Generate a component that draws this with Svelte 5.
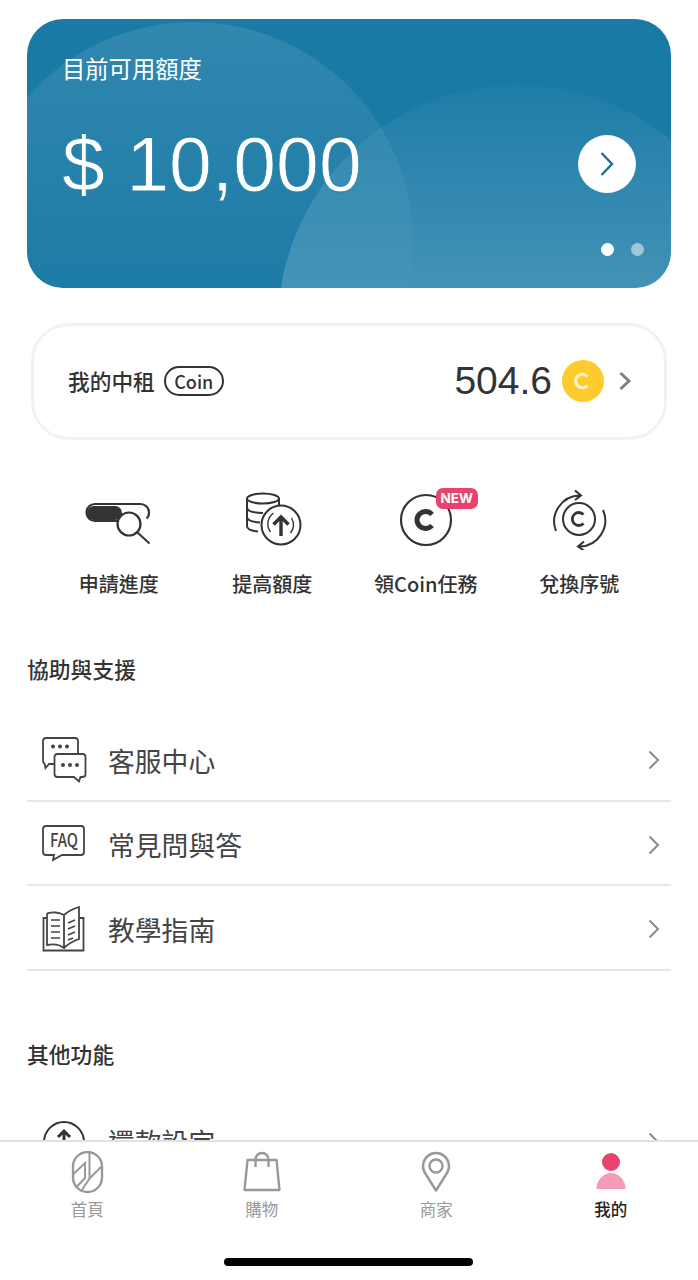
<script>
  const quick = [
    { id: 'progress', label: '申請進度' },
    { id: 'raise', label: '提高額度' },
    { id: 'task', label: '領Coin任務' },
    { id: 'redeem', label: '兌換序號' },
  ];
  const support = [
    { id: 'chat', label: '客服中心' },
    { id: 'faq', label: '常見問與答' },
    { id: 'book', label: '教學指南' },
  ];
  const tabs = [
    { id: 'home', label: '首頁' },
    { id: 'shop', label: '購物' },
    { id: 'shops', label: '商家' },
    { id: 'me', label: '我的', active: true },
  ];
</script>

{#snippet chevron()}
  <svg class="chev" viewBox="0 0 14 22" width="14" height="22">
    <path d="M2.5 2.5 11 11 2.5 19.5" fill="none" stroke="#8c8c8c" stroke-width="2" />
  </svg>
{/snippet}

<div class="page">
  <section class="card">
    <div class="blob blob-a"></div>
    <div class="blob blob-b"></div>
    <div class="card-label">目前可用額度</div>
    <div class="card-mid">
      <div class="card-amount">$ 10,000</div>
      <div class="card-go">
        <svg viewBox="0 0 16 28" width="16" height="28">
          <path d="M2.5 3 13 14 2.5 25" fill="none" stroke="#1d6f94" stroke-width="2.4" />
        </svg>
      </div>
    </div>
    <div class="dots"><i class="on"></i><i></i></div>
  </section>

  <section class="coin">
    <span class="coin-title">我的中租</span>
    <span class="coin-pill">Coin</span>
    <span class="coin-num">504.6</span>
    <svg class="coin-badge" viewBox="0 0 42 42" width="42" height="42">
      <circle cx="21" cy="21" r="21" fill="#fdcb2e" />
      <path d="M25.5 16.500a6.800 6.800 0 1 0 0 9" fill="none" stroke="#fff3c8" stroke-width="3" />
    </svg>
    <svg class="coin-chev" viewBox="0 0 14 22" width="14" height="22">
      <path d="M2.5 3 11 11 2.5 19" fill="none" stroke="#808080" stroke-width="3" />
    </svg>
  </section>

  <section class="quick">
    {#each quick as q}
      <div class="quick-item">
        <div class="quick-icon">
          <svg viewBox="0 0 80 64" width="80" height="64" fill="none" stroke="#333" stroke-width="2">
            {#if q.id === 'progress'}
              <path d="M46 35H16a8.5 8.5 0 0 1 0-17h45.500a8.500 8.500 0 0 1 8.500 8.500q0 4-2.500 6" stroke-width="2.200" />
              <rect x="8" y="20" width="35" height="14" rx="7" fill="#333" stroke="none" />
              <circle cx="50" cy="38" r="11.500" fill="#fff" stroke-width="2.200" />
              <path d="M58.500 46.500 70.500 57.500" />
            {:else if q.id === 'raise'}
              <ellipse cx="31" cy="12.500" rx="16" ry="5" />
              <path d="M15 12.500V40q0 4.500 11 5.500M15 21.500q0 5 16 5.500M15 31q0 4.500 13 5.500M47 12.500V22" />
              <circle cx="49" cy="39" r="19.500" fill="#fff" />
              <path d="M38.500 46a13.500 13.500 0 0 1 3-19M59.500 32a13.500 13.500 0 0 1-1 15" stroke-width="1.400" />
              <path d="M49 50V31M41.500 38.500 49 31l7.500 7.500" stroke-width="3.400" />
            {:else if q.id === 'task'}
              <circle cx="40" cy="34" r="25" stroke-width="2.200" />
              <path d="M46 28.500a8.500 8.500 0 1 0 0 11" stroke-width="5" />
            {:else}
              <circle cx="40" cy="33" r="16" stroke-width="2" />
              <path d="M44.500 28.500a6.500 6.500 0 1 0 0 9" stroke-width="2.800" />
              <path d="M17 45a26 26 0 0 1 24-35.500M36 4.500l6 5-6 4.500" stroke-width="2" />
              <path d="M64 24a26 26 0 0 1-23 36.500M45 55.500l-6 5 6 4" stroke-width="2" />
            {/if}
          </svg>
          {#if q.id === 'task'}<span class="new">NEW</span>{/if}
        </div>
        <div class="quick-label">{q.label}</div>
      </div>
    {/each}
  </section>

  <h2 class="sec sec-help">協助與支援</h2>
  <div class="list">
    {#each support as s}
      <div class="row">
        <svg class="row-icon" viewBox="0 0 46 46" width="46" height="46" fill="none" stroke="#444" stroke-width="1.800">
          {#if s.id === 'chat'}
            <path d="M13 27H8l-3.500 4-1-4.500Q2 26 2 24V4q0-3 3-3h29q3 0 3 3v12" />
            <path d="M16.500 17h25q3 0 3 3v17q0 3-3 3h-2l-1.500 4.500-5-4.500H16.500q-3 0-3-3V20q0-3 3-3Z" fill="#fff" />
            <g fill="#444" stroke="none">
              <circle cx="12" cy="9.500" r="2" /><circle cx="19" cy="9.500" r="2" /><circle cx="26" cy="9.500" r="2" />
              <circle cx="22" cy="28" r="2" /><circle cx="29" cy="28" r="2" /><circle cx="36" cy="28" r="2" />
            </g>
          {:else if s.id === 'faq'}
            <path d="M5 4h35q3 0 3 3v23q0 3-3 3H21l-9 5 1-5H5q-3 0-3-3V7q0-3 3-3Z" />
            <text x="9" y="25" font-size="18" font-weight="500" fill="#444" stroke="none" textLength="28" lengthAdjust="spacingAndGlyphs">FAQ</text>
          {:else}
            <path d="M23 9C18 6 11 6 8 7q-2 0-2 2v30c5-1 12-1 17 3 4-4 9-7 15-9V1c-6 2-11 4-15 8ZM23 9v33" />
            <path d="M6 12H2.500v32.500H42.500V12H38" />
            <path d="M10 14h9M10 20h9M10 26h9M10 32h9M27 17l7-3M27 23l7-3M27 29l7-3M27 34l5-2" stroke-width="1.600" />
          {/if}
        </svg>
        <span class="row-label">{s.label}</span>
        {@render chevron()}
      </div>
    {/each}
  </div>

  <h2 class="sec sec-other">其他功能</h2>
  <div class="list">
    <div class="row">
      <svg class="row-icon" viewBox="0 0 46 46" width="46" height="46" fill="none" stroke="#333" stroke-width="2">
        <circle cx="23" cy="23" r="20" />
        <path d="M17 18 23 12l6 6M23 12v16" stroke-width="3" />
      </svg>
      <span class="row-label">還款設定</span>
      {@render chevron()}
    </div>
  </div>

  <nav class="tabbar">
    {#each tabs as t}
      <div class="tab" class:active={t.active}>
        <svg viewBox="0 0 44 44" width="44" height="44" fill="none" stroke="#999" stroke-width="2.400">
          {#if t.id === 'home'}
            <rect x="8" y="1" width="29" height="40" rx="14.500" />
            <path d="M8.500 23 20 12v15L11 36.500M24.500 2v25.500L36 16M24.500 27.500 17 39" stroke-width="2" />
          {:else if t.id === 'shop'}
            <path d="M7.500 9h29L39.500 39h-35Z" stroke-linejoin="round" />
            <path d="M15.500 16V8.500a6.500 6.500 0 0 1 13 0V16" />
          {:else if t.id === 'shops'}
            <path d="M22 39.500 11 22a13 13 0 1 1 22 0Z" stroke-linejoin="round" />
            <circle cx="22" cy="15" r="6.500" />
          {:else}
            <circle cx="22" cy="11" r="9" fill="#e8436f" stroke="none" />
            <path d="M7.500 38a14.500 16 0 0 1 29 0Z" fill="#f29cb5" stroke="none" />
          {/if}
        </svg>
        <span>{t.label}</span>
      </div>
    {/each}
    <div class="home-bar"></div>
  </nav>
</div>

<style>
  :global(body) { background: #fff; }

  .page {
    position: relative;
    width: 698px;
    height: 1280px;
    overflow: hidden;
    background: #fff;
    padding: 19px 27px 0;
    box-sizing: border-box;
    font-family: "Noto Sans CJK TC", "Noto Sans", sans-serif;
    color: #333;
  }

  .card {
    position: relative;
    height: 269px;
    border-radius: 36px;
    overflow: hidden;
    background: #1a7aa6;
    color: #fff;
    padding: 33px 35px 0;
    box-sizing: border-box;
  }
  .blob { position: absolute; border-radius: 50%; }
  .blob-a {
    left: -54px; top: 3px; width: 440px; height: 440px;
    background: linear-gradient(180deg, rgba(255, 255, 255, 0.1) 0%, rgba(255, 255, 255, 0.01) 60%);
  }
  .blob-b {
    left: 251px; top: 66px; width: 480px; height: 480px;
    background: linear-gradient(180deg, rgba(255, 255, 255, 0.02) 0%, rgba(255, 255, 255, 0.18) 42%);
  }
  .card-label { position: relative; font-size: 23.300px; line-height: 32px; }
  .card-mid {
    position: relative;
    display: flex;
    align-items: center;
    justify-content: space-between;
    margin-top: 32px;
  }
  .card-amount {
    font-family: "Liberation Sans", sans-serif;
    font-size: 77px;
    line-height: 96px;
    -webkit-text-stroke: 0.8px #2080a9;
  }
  .card-go {
    width: 58px; height: 58px; border-radius: 50%;
    background: #fff;
    display: flex; align-items: center; justify-content: center;
  }
  .dots { position: absolute; right: 27px; bottom: 32px; display: flex; gap: 17px; }
  .dots i { width: 13px; height: 13px; border-radius: 50%; background: rgba(255, 255, 255, 0.5); }
  .dots i.on { background: #fff; }

  .coin {
    display: flex;
    align-items: center;
    margin: 35px 4px 0;
    height: 117px;
    border: 3px solid #eef4f5;
    border-radius: 38px;
    padding: 0 32px 2px 34px;
    box-sizing: border-box;
  }
  .coin-title { font-size: 21.700px; font-weight: 500; }
  .coin-pill {
    margin-left: 9px;
    height: 30px; width: 60px;
    border: 2px solid #333; border-radius: 16px;
    box-sizing: border-box;
    text-align: center;
    font-size: 18px; line-height: 26px; font-weight: 500;
  }
  .coin-num { margin-left: auto; font-family: "Liberation Sans", sans-serif; font-size: 39px; }
  .coin-badge { margin-left: 10px; }
  .coin-chev { margin-left: 14px; }

  .quick {
    display: grid;
    grid-template-columns: repeat(4, 153.500px);
    margin: 46px 0 0 15px;
  }
  .quick-item { display: flex; flex-direction: column; align-items: center; }
  .quick-icon { position: relative; width: 80px; height: 64px; }
  .new {
    position: absolute;
    left: 50px; top: 2px;
    width: 42px; height: 21px;
    border-radius: 7px;
    background: #e8436f;
    color: #fff;
    font-family: Inter, sans-serif;
    font-size: 13.500px; font-weight: 700;
    line-height: 21px;
    text-align: center;
  }
  .quick-label { margin-top: 19px; font-size: 20px; font-weight: 500; line-height: 30px; white-space: nowrap; }

  .sec { margin: 0; font-size: 21.800px; font-weight: 500; line-height: 32px; }
  .sec-help { margin-top: 54px; }
  .sec-other { margin-top: 67px; }

  .list { display: flex; flex-direction: column; }
  .sec-help + .list { margin-top: 32px; }
  .sec-other + .list { margin-top: 29px; }
  .row {
    display: flex;
    align-items: center;
    height: 84.500px;
    box-sizing: border-box;
    padding: 4px 10px 0 14px;
    border-bottom: 2px solid #e6e8e8;
  }
  .row-label { margin-left: 21px; font-size: 26.800px; color: #444; }
  .chev { margin-left: auto; }

  .tabbar {
    position: absolute;
    left: 0; right: 0; bottom: 0;
    height: 140px;
    background: #fff;
    border-top: 2px solid #e2e2e2;
    box-sizing: border-box;
    display: grid;
    grid-template-columns: repeat(4, 1fr);
    align-content: start;
    padding-top: 9px;
  }
  .tab { display: flex; flex-direction: column; align-items: center; font-size: 16.500px; color: #999; line-height: 24px; }
  .tab span { margin-top: 2px; }
  .tab.active { color: #222; font-weight: 500; }
  .home-bar {
    position: absolute;
    left: 224px; bottom: 14px;
    width: 249px; height: 8px;
    border-radius: 4px;
    background: #000;
  }
</style>
